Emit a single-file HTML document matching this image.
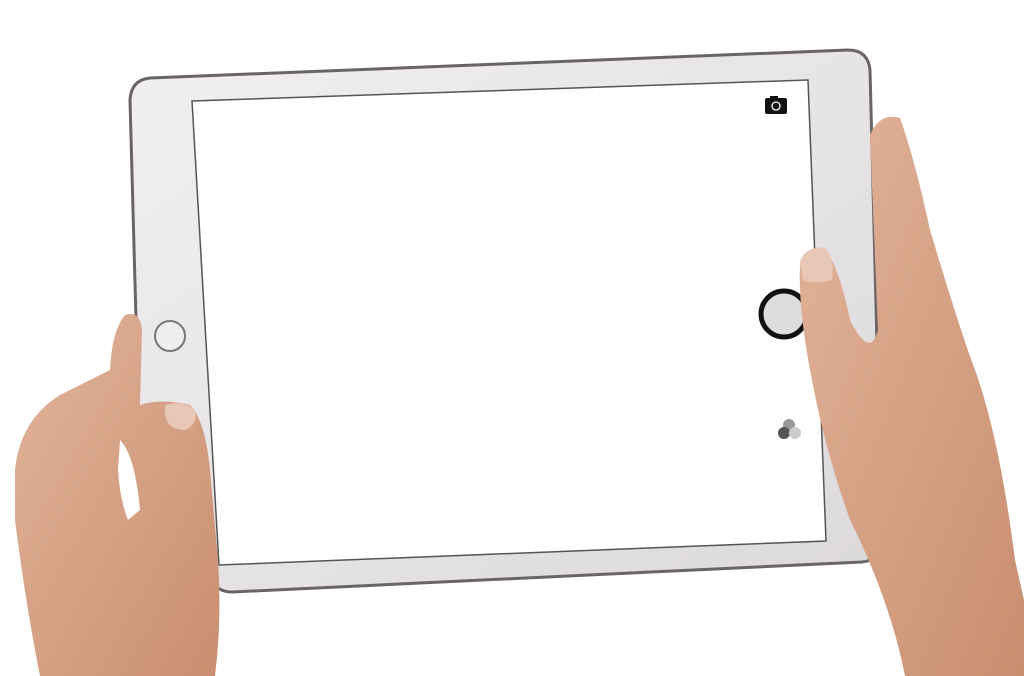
<!DOCTYPE html>
<html><head><style>html,body{margin:0;padding:0;background:#fff;width:1024px;height:676px;overflow:hidden}</style></head>
<body>
<svg width="1024" height="676" viewBox="0 0 1024 676" xmlns="http://www.w3.org/2000/svg">
<defs>
<linearGradient id="fr" x1="0" y1="0" x2="1" y2="1"><stop offset="0" stop-color="#f1eff1"/><stop offset="1" stop-color="#dcd9dc"/></linearGradient>
<linearGradient id="sk" x1="0" y1="0" x2="1" y2="1"><stop offset="0" stop-color="#e2b49a"/><stop offset="1" stop-color="#c98e70"/></linearGradient>
</defs>
<path d="M150,78 L848,50 Q868,50 870,70 L882,540 Q882,560 862,562 L232,592 Q216,592 212,578 L142,540 L130,100 Q131,80 150,78 Z" fill="url(#fr)" stroke="#6b6466" stroke-width="3"/>
<path d="M192,101 L808,80 L826,541 L219,565 Z" fill="#fff" stroke="#555" stroke-width="1.5"/>
<circle cx="170" cy="336" r="15" fill="#eee" stroke="#777" stroke-width="2"/>
<rect x="765" y="98" width="22" height="16" rx="2" fill="#111"/>
<rect x="770" y="96" width="8" height="4" fill="#111"/>
<circle cx="776" cy="106" r="4" fill="none" stroke="#fff" stroke-width="1.3"/>
<circle cx="784" cy="314" r="23" fill="#ddd" stroke="#111" stroke-width="5"/>
<circle cx="789" cy="425" r="6" fill="#999"/>
<circle cx="784" cy="433" r="6" fill="#555"/>
<circle cx="795" cy="433" r="6" fill="#ccc"/>
<path d="M15,470 Q20,420 60,395 L110,370 Q112,330 125,315 Q140,310 142,330 L140,405 Q160,398 190,405 Q205,420 210,470 L218,560 Q222,620 215,676 L40,676 Q25,600 15,520 Z" fill="url(#sk)"/>
<path d="M120,440 Q135,455 140,510 L128,520 Q120,500 118,470 Z" fill="#fff"/>
<path d="M165,405 Q185,400 195,410 Q198,425 185,430 Q168,430 165,415 Z" fill="#e8c7b6"/>
<path d="M870,135 Q880,112 900,118 Q915,160 930,230 Q960,330 975,370 Q1000,440 1015,560 L1024,600 L1024,676 L905,676 Q890,600 850,520 Q825,450 812,380 Q798,310 800,265 Q805,245 825,248 Q840,270 850,320 Q870,360 878,330 Z" fill="url(#sk)"/>
<path d="M800,262 Q805,246 825,248 Q835,258 832,280 Q815,285 803,280 Z" fill="#e8c7b6"/>
</svg>
</body></html>
